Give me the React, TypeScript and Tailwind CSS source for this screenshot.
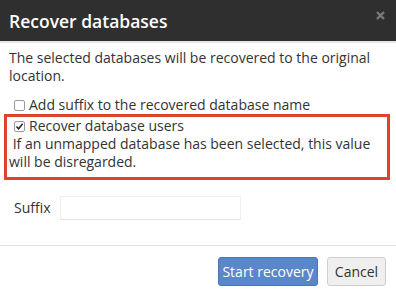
import React from 'react';

const font = { fontFamily: '"Open Sans", "Liberation Sans", sans-serif' };

const Checkbox: React.FC<{ checked?: boolean }> = ({ checked }) => (
  <span className="inline-flex items-center justify-center w-[11px] h-[11px] border border-[#9a9a9a] rounded-[2px] bg-white mr-[4px] shrink-0">
    {checked && (
      <svg width="9" height="9" viewBox="0 0 9 9">
        <path d="M1.5 4.6 L3.6 6.8 L7.6 1.8" fill="none" stroke="#222" strokeWidth="1.5" />
      </svg>
    )}
  </span>
);

export default function App() {
  return (
    <div className="w-[396px] h-[296px] bg-white text-[#333] overflow-hidden" style={font}>
      <div className="h-[43px] bg-[#2f2f2f] border-b-2 border-[#e6e6e6] flex items-center justify-between pl-[9px] pr-[11px]">
        <h1 className="text-white text-[17.5px] font-semibold leading-none mt-[2px]">Recover databases</h1>
        <svg width="9" height="9" viewBox="0 0 9 9" className="-mt-[10px]">
          <path d="M1 1 L8 8 M8 1 L1 8" stroke="#7a7a7a" strokeWidth="2.4" />
        </svg>
      </div>

      <div className="px-[9px] pt-[6px] text-[14px] leading-[18px]">
        <p>The selected databases will be recovered to the original location.</p>

        <label className="flex items-center mt-[11px] pl-[5px]">
          <Checkbox />
          <span>Add suffix to the recovered database name</span>
        </label>

        <div className="-ml-[5px] -mr-[3px] border-[3px] border-[#e0432b] pl-[2px] pb-[6px]">
          <label className="flex items-center pl-[5px]">
            <Checkbox checked />
            <span>Recover database users</span>
          </label>
          <p>&nbsp;If an unmapped database has been selected, this value will be disregarded.</p>
        </div>

        <div className="flex items-center mt-[16px] pl-[5px]">
          <span className="w-[46px]">Suffix</span>
          <input className="w-[181px] h-[24px] border border-[#f0f0f0] border-b-[#e2e2e2] outline-none" />
        </div>
      </div>

      <div className="mt-[25px] border-t border-[#e3e3e3] flex justify-end gap-[9px] pt-[11px] pr-[10px]">
        <button className="h-[29px] w-[100px] rounded-[3px] bg-[#5a87c9] border border-[#4b74b3] text-white text-[14px]">Start recovery</button>
        <button className="h-[29px] w-[59px] rounded-[3px] bg-[#efefef] border border-[#cfcfcf] text-[#333] text-[14px]">Cancel</button>
      </div>
    </div>
  );
}
